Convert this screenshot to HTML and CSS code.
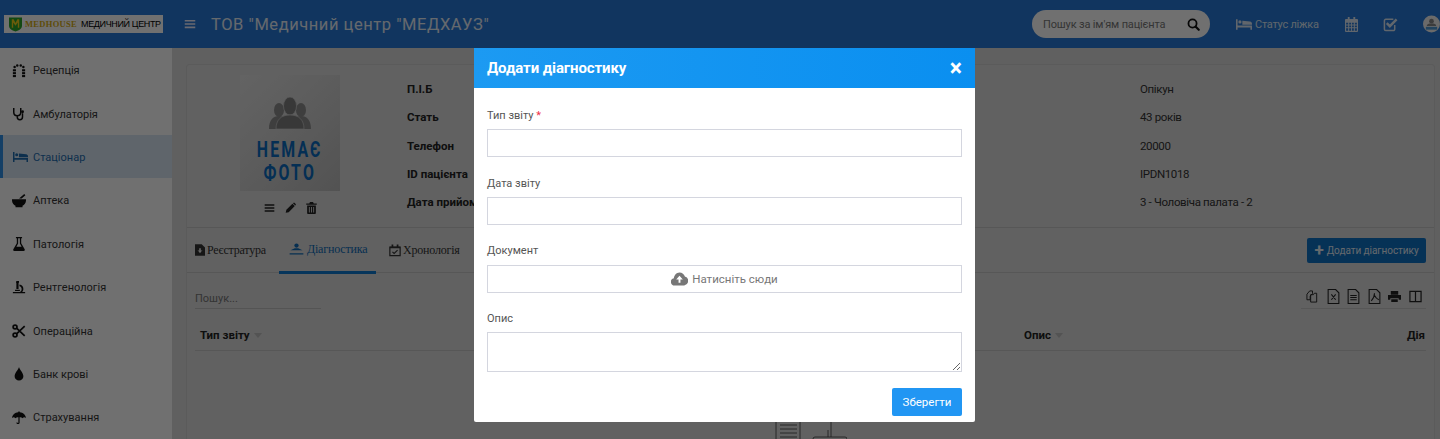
FILE: index.html
```html
<!DOCTYPE html>
<html lang="uk">
<head>
<meta charset="utf-8">
<title>Додати діагностику</title>
<link rel="stylesheet" href="styles.css">
</head>
<body>
<svg class="sprite" width="0" height="0" aria-hidden="true">
  <symbol id="i-bars" viewBox="0 0 16 16"><path d="M1 2.500h14v2.200H1zM1 6.900h14v2.200H1zM1 11.300h14v2.200H1z"/></symbol>
  <symbol id="i-bed" viewBox="0 0 24 16"><path d="M0 0h2.400v9.500H24V16h-2.400v-3.500H2.400V16H0zM3.500 4.200a2.400 2.400 0 1 1 4.800 0 2.400 2.400 0 0 1-4.800 0zM9.500 2.200 21 3.600c1.800.3 3 1.600 3 3.200v1.700H9.500z"/></symbol>
  <symbol id="i-pencil" viewBox="0 0 16 16"><path d="M1 15l1-4.400L10.800 1.800l3.400 3.400L5.400 14zM11.600 1l.8-.6c.5-.3 1-.3 1.400.1l1.700 1.700c.4.4.4.9.1 1.400l-.6.8z"/></symbol>
  <symbol id="i-trash" viewBox="0 0 14 16"><path d="M5 0h4l1 2h4v1.500H0V2h4zM1.200 4.500h11.600V14.500c0 .8-.7 1.500-1.500 1.500H2.700c-.8 0-1.500-.7-1.500-1.500zM3.500 6.500v7.500h1.200V6.500zM6.400 6.500v7.500h1.200V6.500zM9.300 6.500v7.500h1.200V6.500z" fill-rule="evenodd"/></symbol>
</svg>

<div class="page">
  <header class="topbar">
    <div class="logo">
      <svg class="logo-shield" viewBox="0 0 14 16"><path fill="#2aa52a" d="M0 1h14v9c0 3-3 5-7 6-4-1-7-3-7-6z"/><path fill="#f2d21a" d="M3 3h2l2 4 2-4h2v9H9.500V6.500L7 10 4.500 6.500V12H3z"/></svg>
      <span class="logo-brand">MEDHOUSE</span>
      <span class="logo-sub">МЕДИЧНИЙ ЦЕНТР</span>
    </div>
    <svg class="burger"><use href="#i-bars"/></svg>
    <h1 class="hospital">ТОВ "Медичний центр "МЕДХАУЗ"</h1>
    <div class="search-pill">
      <span>Пошук за ім'ям пацієнта</span>
      <svg viewBox="0 0 16 16" class="search-icon"><circle cx="6.800" cy="6.800" r="5" fill="none" stroke="currentColor" stroke-width="2.200"/><path d="M10.500 10.500l4 4" stroke="currentColor" stroke-width="2.600" stroke-linecap="round"/></svg>
    </div>
    <div class="status"><svg class="status-bed"><use href="#i-bed"/></svg><span>Статус ліжка</span></div>
    <svg class="top-cal" viewBox="0 0 14 16"><path fill="currentColor" fill-rule="evenodd" d="M3 0h2v2h4V0h2v2h2a1 1 0 0 1 1 1v12a1 1 0 0 1-1 1H1a1 1 0 0 1-1-1V3a1 1 0 0 1 1-1h2zM1.200 6v2h2.200V6zm3.300 0v2h2V6zm3 0v2h2V6zm3.100 0v2h2.200V6zM1.200 9v2h2.200V9zm3.300 0v2h2V9zm3 0v2h2V9zm3.100 0v2h2.200V9zM1.200 12v2.800h2.200V12zm3.300 0v2.800h2V12zm3 0v2.800h2V12zm3.100 0v2.800h2.200V12z"/></svg>
    <svg class="top-check" viewBox="0 0 16 16"><path fill="none" stroke="currentColor" stroke-width="1.600" d="M12.500 8.500V13a1.500 1.500 0 0 1-1.500 1.500H3A1.500 1.500 0 0 1 1.500 13V4A1.500 1.500 0 0 1 3 2.500h8"/><path fill="none" stroke="currentColor" stroke-width="2.600" d="M4 6.500l3.300 3.300L14.500 2.500"/></svg>
    <svg class="avatar" viewBox="0 0 18 18"><circle cx="9" cy="9" r="9" fill="#f2f2f2"/><circle cx="9" cy="6" r="2.500" fill="#8a8a8a"/><path fill="#8a8a8a" d="M4 11c0-2 2-2.500 5-2.500s5 .5 5 2.500z"/><path fill="#4f9bd8" d="M3 12h12v3H3z"/></svg>
  </header>

  <div class="main">
    <nav class="sidebar">
      <a class="nav-item"><svg class="nav-icon" viewBox="0 0 16 16"><g fill="currentColor"><circle cx="3" cy="3.500" r="1.400"/><circle cx="6" cy="1.600" r="1.400"/><circle cx="10" cy="1.600" r="1.400"/><circle cx="13" cy="3.500" r="1.400"/><rect x="1" y="6" width="3.500" height="2.400"/><rect x="11.500" y="6" width="3.500" height="2.400"/><rect x="1" y="9.300" width="3.500" height="2.400"/><rect x="11.500" y="9.300" width="3.500" height="2.400"/><rect x="1" y="12.600" width="3.500" height="2.400"/><rect x="11.500" y="12.600" width="3.500" height="2.400"/></g></svg><span>Рецепція</span></a>
      <a class="nav-item"><svg class="nav-icon" viewBox="0 0 16 16"><path fill="none" stroke="currentColor" stroke-width="1.700" d="M2 1v5c0 2.500 1.700 4 4 4s4-1.500 4-4V1M6 10v1.500c0 1.800 1.200 3 3 3s3-1.200 3-3V7"/><circle cx="12" cy="5.500" r="1.700" fill="currentColor"/></svg><span>Амбулаторія</span></a>
      <a class="nav-item is-active"><svg class="nav-icon" viewBox="0 0 24 16"><use href="#i-bed"/></svg><span>Стаціонар</span></a>
      <a class="nav-item"><svg class="nav-icon" viewBox="0 0 16 16"><path fill="currentColor" d="M0 6h16v1.500c0 3-2 5-4 6V15H4v-1.500c-2-1-4-3-4-6zM8 5l6-5 1.300 1.500L11 5z"/></svg><span>Аптека</span></a>
      <a class="nav-item"><svg class="nav-icon" viewBox="0 0 16 16"><path fill="currentColor" fill-rule="evenodd" d="M4.500 0h7v1.500h-1V7l4 7c.5 1-.1 2-1.200 2H2.700c-1.100 0-1.700-1-1.200-2l4-7V1.500h-1zM7 1.500V7.500L5 11h6L9 7.500v-6z"/></svg><span>Патологія</span></a>
      <a class="nav-item"><svg class="nav-icon" viewBox="0 0 16 16"><path fill="currentColor" d="M5 0h3v2h-.5v7H5V2h-.5zM8.500 4c3 .5 4.500 2.500 4.500 5 0 1.500-.6 2.700-1.500 3.500H15V14H1v-1.500h8c1.200-.5 2-1.800 2-3.500 0-1.500-1-2.700-2.500-3zM3.500 10h5.500v1.500H3.500z"/></svg><span>Рентгенологія</span></a>
      <a class="nav-item"><svg class="nav-icon" viewBox="0 0 16 16"><g fill="none" stroke="currentColor" stroke-width="2"><circle cx="3.500" cy="3.500" r="2.200"/><circle cx="3.500" cy="12.500" r="2.200"/><path d="M5.500 5l9 8.500M5.500 11l9-8.500"/></g></svg><span>Операційна</span></a>
      <a class="nav-item"><svg class="nav-icon" viewBox="0 0 16 16"><path fill="currentColor" d="M8 0c.6 3 5 6.500 5 10.500A5 5 0 0 1 3 10.500C3 6.500 7.400 3 8 0z"/></svg><span>Банк крові</span></a>
      <a class="nav-item"><svg class="nav-icon" viewBox="0 0 16 16"><path fill="currentColor" d="M8 0l1 1.500c3.500.3 6.500 3 7 6.500-1.300-1-2.700-1-4 .2-1-1-2-1.300-3.300-1v5.800c0 2.600-3.700 2.600-3.700 0h1.400c0 .9.900.9.900 0V7.200C6 6.900 5 7.200 4 8.200 2.700 7 1.300 7 0 8c.5-3.500 3.500-6.200 7-6.500z"/></svg><span>Страхування</span></a>
    </nav>

    <section class="content">
      <div class="card">
        <div class="profile">
          <div class="photo-col">
            <div class="photo">
              <svg class="photo-people" viewBox="0 0 42 32"><g fill="#8e8e8e"><ellipse cx="10" cy="13" rx="5" ry="7"/><ellipse cx="32" cy="13" rx="5" ry="7"/><path d="M0 32c0-9 4-13 10-13 3 0 5 1 6 3L9 32zM42 32c0-9-4-13-10-13-3 0-5 1-6 3l7 10z"/></g><g fill="#808080" stroke="#c4c4c4" stroke-width=".8"><ellipse cx="21" cy="9" rx="6.500" ry="9"/><path d="M7 32c0-9 5-14 14-14s14 5 14 14z"/></g></svg>
              <div class="photo-text">НЕМАЄ<br>ФОТО</div>
            </div>
            <div class="photo-actions">
              <svg class="pa-icon"><use href="#i-bars"/></svg>
              <svg class="pa-icon"><use href="#i-pencil"/></svg>
              <svg class="pa-icon"><use href="#i-trash"/></svg>
            </div>
          </div>
          <dl class="info">
            <dt>П.І.Б</dt><dd>Опікун</dd>
            <dt>Стать</dt><dd>43 років</dd>
            <dt>Телефон</dt><dd>20000</dd>
            <dt>ID пацієнта</dt><dd>IPDN1018</dd>
            <dt>Дата прийому</dt><dd>3 - Чоловіча палата - 2</dd>
          </dl>
        </div>

        <div class="tabs">
          <a class="tab"><svg class="tab-icon" viewBox="0 0 12 14"><path fill="currentColor" d="M0 0h8l4 4v10H0z"/><path fill="#e8e8e8" d="M3 7l3 4 3-4-2 1V5H5v3z"/></svg>Реєстратура</a>
          <a class="tab is-current"><svg class="tab-icon wide" viewBox="0 0 16 14"><circle cx="8" cy="3" r="2.500" fill="currentColor"/><path fill="currentColor" d="M1 8.500h14L10 6H6zM0 12h16v1.400H0z"/></svg>Діагностика</a>
          <a class="tab"><svg class="tab-icon" viewBox="0 0 14 14"><path fill="none" stroke="currentColor" stroke-width="1.400" d="M1 3h12v10H1z"/><path stroke="currentColor" stroke-width="2" d="M1 3.500h12M4 0v3M10 0v3"/><path fill="none" stroke="currentColor" stroke-width="1.300" d="M4 8.500l2 2 4-4"/></svg>Хронологія</a>
          <button class="add-btn"><span class="plus">+</span>Додати діагностику</button>
        </div>

        <div class="toolbar">
          <div class="table-search">Пошук...</div>
          <div class="exports">
            <svg viewBox="0 0 14 14"><path d="M1 4.500L4 1h3v3L4.500 6.500v4H1zM5 5h3l1-1.500h2.500V13H5z"/></svg>
            <svg viewBox="0 0 12 14"><path d="M1 .5h7l3 3v10H1zM4 5l4 5M8 5l-4 5"/></svg>
            <svg viewBox="0 0 12 14"><path d="M1 .5h7l3 3v10H1zM3 6h6M3 8h6M3 10h6"/></svg>
            <svg viewBox="0 0 12 14"><path d="M1 .5h7l3 3v10H1zM6 4c0 3-1 5-3 7M6 6c1 2 2 3 4 4"/></svg>
            <svg viewBox="0 0 14 14" class="filled"><path d="M3 1h8v4H3zM0 5.500h14v5h-2.500V9h-9v1.500H0zM3.500 10h7v3h-7z"/></svg>
            <svg viewBox="0 0 14 14"><path d="M1 1.500h12v11H1zM7 1.500v11" stroke-width="1.300"/></svg>
          </div>
        </div>

        <div class="thead">
          <div class="th">Тип звіту<i class="sort"></i></div>
          <div class="th">Опис<i class="sort"></i></div>
          <div class="th th-right">Дія</div>
        </div>

        <div class="empty">
          <svg viewBox="0 0 72 24" class="empty-art"><g fill="none" stroke="#3c3c3c" stroke-width=".8"><path d="M1 0v24M25 0v24M5 3h17M5 7h17M5 11h17M5 15h17"/><path d="M56 0v15M38 24v-7q0-2 2-2h30q2 0 2 2v7"/><path d="M53 8v7"/></g></svg>
        </div>
      </div>
    </section>
  </div>
</div>

<div class="overlay">
  <div class="modal">
    <div class="modal-head">
      <h2>Додати діагностику</h2>
      <span class="close">×</span>
    </div>
    <form class="modal-body">
      <div class="field"><label>Тип звіту <b class="req">*</b></label><input type="text"></div>
      <div class="field"><label>Дата звіту</label><input type="text"></div>
      <div class="field"><label>Документ</label>
        <div class="upload">
          <svg viewBox="0 0 18 14" class="upload-icon"><path fill="currentColor" fill-rule="evenodd" d="M4 14a4 4 0 0 1-1-7.900C3.300 3 5.700 0 9 0c2.800 0 5 1.800 5.700 4.300A5 5 0 0 1 14 14zM9 3.500L5.500 7.500H8v3.500h2V7.500h2.500z"/></svg>
          <span>Натисніть сюди</span>
        </div>
      </div>
      <div class="field"><label>Опис</label><textarea></textarea></div>
      <div class="actions"><button type="button" class="save">Зберегти</button></div>
    </form>
  </div>
</div>
</body>
</html>
```
FILE: styles.css
```css
* { box-sizing: border-box; }
html, body { margin: 0; height: 100%; overflow: hidden; }
body { font-family: "Roboto", "Noto Sans", sans-serif; font-size: 12px; color: #333; background: #dadada; }
.sprite { position: absolute; }
svg { display: block; fill: currentColor; }

.page { height: 439px; overflow: hidden; }

.topbar { height: 48px; display: flex; align-items: center; background: #287ad8; color: #fff; }
.logo { width: 159px; height: 18px; margin-left: 4px; background: #fff; display: flex; align-items: center; padding-left: 5px; white-space: nowrap; overflow: hidden; }
.logo-shield { width: 13px; height: 16px; flex: none; }
.logo-brand { font: bold 8.500px "Liberation Serif", serif; color: #d9ae11; margin-left: 3px; letter-spacing: .3px; }
.logo-sub { font: 9px "Liberation Sans", sans-serif; color: #000; margin-left: 4px; letter-spacing: -.35px; }
.burger { width: 12px; height: 12px; margin-left: 21px; flex: none; color: #eef; }
.hospital { font-size: 16.500px; font-weight: 400; margin: 0 0 0 15px; letter-spacing: .55px; color: #e6eef8; flex: 1; white-space: nowrap; font-family: "Roboto", sans-serif; }
.search-pill { width: 178px; height: 28px; border-radius: 14px; background: #fff; display: flex; align-items: center; justify-content: space-between; padding: 0 10px 0 11px; color: #777; font-size: 11px; letter-spacing: -.15px; }
.search-icon { width: 13px; height: 13px; color: #111; }
.status { display: flex; align-items: center; margin-left: 26px; width: 109px; color: #dce8f5; font-size: 11px; letter-spacing: -.25px; }
.status-bed { width: 16px; height: 11px; margin-right: 3px; }
.top-cal { width: 13px; height: 15px; color: #dce8f5; flex: none; }
.top-check { width: 15px; height: 15px; margin-left: 25px; color: #dce8f5; flex: none; }
.avatar { width: 17px; height: 20px; margin-left: 25px; flex: none; }

.main { display: flex; height: 391px; }
.sidebar { width: 172px; flex: none; background: #fff; }
.nav-item { height: 43.400px; display: flex; align-items: center; padding: 2px 0 0 12px; color: #333; font-size: 11px; }
.nav-item span { margin-left: 7px; }
.nav-icon { width: 14px; height: 14px; flex: none; color: #111; }
.nav-item.is-active { background: #d8e6f3; border-left: 3px solid #2f8fe8; padding-left: 10px; color: #1f6cb0; }
.nav-item.is-active .nav-icon { color: #1f6cb0; width: 15px; }
.nav-item.is-active span { margin-left: 5px; }

.content { flex: 1; padding: 16px 5px 0 14px; min-width: 0; }
.card { border: 1px solid #cfcfcf; border-radius: 3px; background: #dcdcdc; height: 400px; }

.profile { display: flex; height: 163px; border-bottom: 1px solid #c6c6c6; }
.photo-col { width: 220px; flex: none; padding: 10px 0 0 53px; }
.photo { width: 100px; height: 116px; background: linear-gradient(135deg, #e2e2e2, #cfcfcf 55%, #bcbcbc); display: flex; flex-direction: column; align-items: center; padding-top: 22px; }
.photo-people { width: 42px; height: 32px; flex: none; }
.photo-text { color: #0a6bc0; font-weight: 700; font-size: 22px; line-height: 23px; letter-spacing: 3px; text-align: center; margin-top: 9px; transform: scaleX(.72); white-space: nowrap; }
.photo-actions { display: flex; width: 100px; justify-content: center; gap: 10px; margin-top: 11px; }
.pa-icon { width: 11px; height: 12px; color: #222; }

.info { display: grid; grid-template-columns: 733px 1fr; grid-auto-rows: 28.300px; margin: 10px 0 0; flex: 1; align-items: center; }
.info dt { font-weight: 700; font-size: 11.500px; color: #222; }
.info dd { margin: 0; font-size: 11.500px; letter-spacing: -.35px; color: #333; }

.tabs { display: flex; align-items: stretch; height: 45px; border-bottom: 1.500px solid #c6c6c6; padding-left: 8px; font-family: "Liberation Serif", serif; font-size: 12px; letter-spacing: -.2px; color: #333; }
.tab { display: flex; align-items: center; white-space: nowrap; }
.tab:first-child { width: 84px; }
.tab:nth-child(2) { width: 97px; padding-left: 10px; border-bottom: 3px solid #0f7ad0; color: #0f6cb8; margin-bottom: -1.500px; }
.tab:nth-child(3) { padding-left: 13px; }
.tab-icon { width: 10px; height: 12px; margin-right: 2px; flex: none; }
.tab-icon.wide { width: 15px; margin-right: 3px; }
.tab:nth-child(3) .tab-icon { width: 12px; height: 13px; margin-right: 2px; }
.add-btn { margin: 10px 8px 0 auto; height: 25px; width: 119px; background: #0f72c4; color: #e4eef8; border: 0; border-radius: 2px; font-family: "Roboto", sans-serif; font-size: 10px; letter-spacing: -.05px; display: flex; align-items: center; justify-content: center; padding: 0; white-space: nowrap; }
.plus { font-size: 17px; font-weight: 700; line-height: 1; margin-right: 3px; }

.toolbar { display: flex; justify-content: space-between; padding: 16px 8px 0 8px; height: 36px; }
.table-search { width: 126px; height: 20px; border-bottom: 1px solid #c0c0c0; color: #777; font-size: 11px; line-height: 20px; }
.exports { width: 125px; height: 20px; border-bottom: 1px solid #c6c6c6; display: flex; justify-content: space-between; padding: 0 4px 0 5px; }
.exports svg { width: 13px; height: 15px; fill: none; stroke: #222; stroke-width: 1; }
.exports svg.filled { fill: #222; stroke: none; }

.thead { display: grid; grid-template-columns: 824px 1fr auto; margin: 0 8px; padding: 19px 1px 4px 5px; border-bottom: 1px solid #c6c6c6; height: 42px; font-weight: 700; font-size: 11.500px; color: #222; }
.th { white-space: nowrap; }
.sort { display: inline-block; margin-left: 4px; border: 4px solid transparent; border-top: 5px solid #bdbdbd; border-bottom: 0; vertical-align: 1px; }

.empty { display: flex; justify-content: center; padding: 71px 0 0 0; }
.empty-art { width: 72px; height: 24px; }

.overlay { position: fixed; inset: 0; background: rgba(0, 0, 0, .56); padding: 48px 0 0 474px; }
.modal { width: 501px; height: 374px; background: #fff; display: flex; flex-direction: column; border-radius: 0 0 2px 2px; }
.modal-head { height: 40px; flex: none; background: linear-gradient(90deg, #1c9af2, #0a8ff0); color: #fff; display: flex; align-items: center; justify-content: space-between; padding: 0 13px; }
.modal-head h2 { margin: 0; font-size: 15px; font-weight: 700; letter-spacing: -.1px; }
.close { font-size: 23px; font-weight: 700; line-height: 1; }
.modal-body { padding: 19px 13px 0; }
.field { margin-bottom: 17px; }
.field:first-child { margin-bottom: 18px; }
.field label { display: block; height: 18px; line-height: 18px; margin-bottom: 4px; font-size: 11px; color: #555; }
.field:nth-child(3) label { margin-bottom: 5px; }
.req { color: #f0304a; font-weight: 400; }
.field input, .field textarea, .upload { display: block; width: 475px; height: 28px; border: 1px solid #d4d6df; background: #fff; border-radius: 0; padding: 0; margin: 0; }
.field textarea { height: 40px; resize: vertical; }
.upload { display: flex; align-items: center; justify-content: center; color: #777; font-size: 11.500px; }
.upload-icon { width: 17px; height: 14px; margin-right: 4px; }
.field:nth-child(4) { margin-bottom: 16px; }
.actions { display: flex; justify-content: flex-end; }
.save { width: 70px; height: 28px; background: #2196f3; color: #fff; border: 0; border-radius: 2px; font-family: "Roboto", sans-serif; font-size: 11.500px; padding: 0; }
```
